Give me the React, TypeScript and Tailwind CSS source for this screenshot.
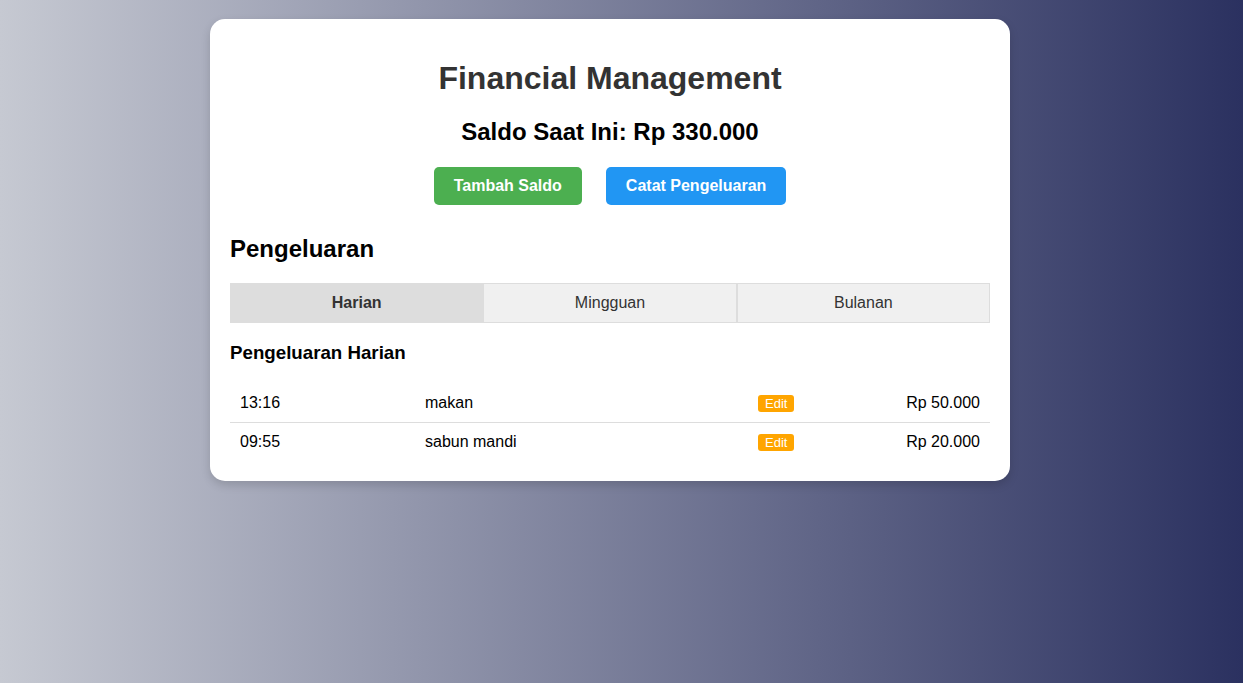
import React from 'react';

const rows = [
  { time: '13:16', desc: 'makan', amount: 'Rp 50.000' },
  { time: '09:55', desc: 'sabun mandi', amount: 'Rp 20.000' },
];

const tabs = ['Harian', 'Mingguan', 'Bulanan'];

export default function App() {
  return (
    <div
      className="min-h-screen w-full bg-[linear-gradient(to_right,#c6c9d2,#2b3160)] pt-[19px] pr-[23px]"
      style={{ fontFamily: '"Liberation Sans", Arial, sans-serif' }}
    >
      <div className="mx-auto w-[800px] rounded-[15px] bg-white p-5 shadow-[0_4px_10px_rgba(0,0,0,0.15)]">
        <h1 className="mt-[21px] text-center text-[32px] leading-[37px] font-bold text-[#333]">Financial Management</h1>
        <h2 className="mt-[21px] text-center text-[24px] leading-[28px] font-bold text-black">Saldo Saat Ini: Rp 330.000</h2>

        {/* action buttons */}
        <div className="mt-[21px] flex justify-center gap-6">
          <button className="h-[38px] rounded-[5px] bg-[#4caf50] px-5 text-[16px] font-bold text-white">Tambah Saldo</button>
          <button className="h-[38px] rounded-[5px] bg-[#2196f3] px-5 text-[16px] font-bold text-white">Catat Pengeluaran</button>
        </div>

        <h2 className="mt-[30px] text-[24px] leading-[28px] font-bold text-black">Pengeluaran</h2>

        {/* period tabs */}
        <div className="mt-5 grid grid-cols-3">
          {tabs.map((t, i) => (
            <button
              key={t}
              className={
                i === 0
                  ? 'h-10 border border-[#ddd] bg-[#ddd] text-[16px] font-bold text-[#333]'
                  : 'h-10 border border-[#ddd] bg-[#f0f0f0] text-[16px] text-[#333]'
              }
            >
              {t}
            </button>
          ))}
        </div>

        <h3 className="mt-[19px] text-[18.72px] leading-[22px] font-bold text-black">Pengeluaran Harian</h3>

        <div className="mt-5">
          {rows.map((r, i) => (
            <div
              key={r.time}
              className={
                i < rows.length - 1
                  ? 'grid h-[39px] grid-cols-[185px_333px_1fr_auto] items-center border-b border-[#ddd] text-[16px] text-black'
                  : 'grid h-[38px] grid-cols-[185px_333px_1fr_auto] items-center text-[16px] text-black'
              }
            >
              <div className="px-[10px]">{r.time}</div>
              <div className="px-[10px]">{r.desc}</div>
              <div className="flex px-[10px]">
                <button className="h-[17px] rounded-[3px] bg-[#ffa500] px-[7px] text-[13px] leading-[17px] text-white">Edit</button>
              </div>
              <div className="px-[10px] text-right">{r.amount}</div>
            </div>
          ))}
        </div>
      </div>
    </div>
  );
}
